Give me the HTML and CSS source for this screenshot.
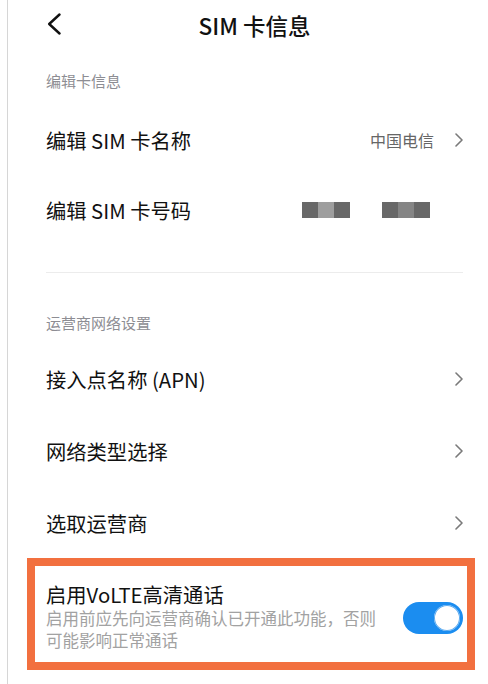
FILE: index.html
```html
<!DOCTYPE html>
<html lang="zh-CN">
<head>
<meta charset="utf-8">
<title>SIM 卡信息</title>
<link rel="stylesheet" href="styles.css">
</head>
<body>
<div class="screen">
  <header class="header">
    <svg class="back" viewBox="0 0 14 22" aria-hidden="true"><polyline points="12.5,1.5 2.2,11 12.5,20.5" fill="none" stroke="#111" stroke-width="2.4" stroke-linecap="round" stroke-linejoin="round"/></svg>
    <div class="title">SIM 卡信息</div>
    <div></div>
  </header>

  <div class="section-label first">编辑卡信息</div>
  <div class="group">
    <div class="row">
      <div class="row-title">编辑 SIM 卡名称</div>
      <div class="value">中国电信</div>
      <svg class="chev" viewBox="0 0 8 14" aria-hidden="true"><polyline points="1,1 7,7 1,13" fill="none" stroke="#7a7a7a" stroke-width="1.6" stroke-linecap="round" stroke-linejoin="round"/></svg>
    </div>
    <div class="row">
      <div class="row-title">编辑 SIM 卡号码</div>
      <div class="mask">
        <span class="px d"></span><span class="px l"></span><span class="px d"></span>
      </div>
      <div class="mask">
        <span class="px d"></span><span class="px m"></span><span class="px d"></span>
      </div>
    </div>
  </div>

  <div class="divider"></div>

  <div class="section-label second">运营商网络设置</div>
  <div class="group second">
    <div class="row tall">
      <div class="row-title">接入点名称 (APN)</div>
      <svg class="chev" viewBox="0 0 8 14" aria-hidden="true"><polyline points="1,1 7,7 1,13" fill="none" stroke="#7a7a7a" stroke-width="1.6" stroke-linecap="round" stroke-linejoin="round"/></svg>
    </div>
    <div class="row tall">
      <div class="row-title">网络类型选择</div>
      <svg class="chev" viewBox="0 0 8 14" aria-hidden="true"><polyline points="1,1 7,7 1,13" fill="none" stroke="#7a7a7a" stroke-width="1.6" stroke-linecap="round" stroke-linejoin="round"/></svg>
    </div>
    <div class="row tall">
      <div class="row-title">选取运营商</div>
      <svg class="chev" viewBox="0 0 8 14" aria-hidden="true"><polyline points="1,1 7,7 1,13" fill="none" stroke="#7a7a7a" stroke-width="1.6" stroke-linecap="round" stroke-linejoin="round"/></svg>
    </div>
  </div>

  <div class="highlight">
    <div class="volte">
      <div class="volte-text">
        <div class="volte-title">启用VoLTE高清通话</div>
        <div class="volte-sub">启用前应先向运营商确认已开通此功能，否则可能影响正常通话</div>
      </div>
      <div class="toggle"><span class="knob"></span></div>
    </div>
  </div>
</div>
</body>
</html>
```

FILE: styles.css
```css
html, body {
  margin: 0;
  padding: 0;
  background: #ffffff;
}

body {
  font-family: "Noto Sans CJK SC", "Noto Sans", sans-serif;
  color: #111111;
}

.screen {
  margin-left: 7px;
  border-left: 1px solid #d6d6d6;
  min-height: 684px;
  box-sizing: border-box;
  padding: 0 25px 0 38px;
  overflow: hidden;
}

.header {
  display: grid;
  grid-template-columns: 1fr auto 1fr;
  align-items: center;
  height: 48px;
}

.back {
  justify-self: start;
  width: 14px;
  height: 22px;
  margin-left: 1px;
}

.title {
  font-size: 22.5px;
  font-weight: 500;
  color: #111111;
  line-height: 30px;
  margin-top: 2px;
}

.section-label {
  font-size: 15px;
  line-height: 20px;
  color: #8d8d93;
}

.section-label.first {
  margin-top: 23px;
}

.section-label.second {
  margin-top: 40px;
}

.group {
  margin-top: 14px;
}

.group.second {
  margin-top: 10px;
}

.row {
  display: flex;
  align-items: center;
  height: 70px;
  font-size: 20.3px;
  color: #111111;
}

.row-title {
  flex: 1;
  line-height: 28px;
}

.value {
  font-size: 16px;
  color: #666666;
  margin-right: 21px;
}

.chev {
  width: 8px;
  height: 14px;
  flex: none;
}

.mask {
  display: flex;
  height: 16px;
  margin-right: 32px;
}

.mask:last-child {
  margin-right: 33px;
}

.px {
  width: 16px;
  height: 16px;
}

.px.d { background: #686868; }
.px.l { background: #9e9e9e; }
.px.m { background: #858585; }

.divider {
  height: 1px;
  background: #ececec;
  margin-top: 27px;
}

.row.tall {
  height: 72px;
}

.highlight {
  margin: -1px -12px 0 -19px;
  border: 8px solid #f2703f;
  padding: 15px 4px 11px 11px;
}

.volte {
  display: flex;
  align-items: center;
  gap: 20px;
}

.volte-text {
  flex: 1;
}

.volte-title {
  font-size: 20.3px;
  line-height: 26px;
  color: #111111;
}

.volte-sub {
  font-size: 16.5px;
  line-height: 22px;
  color: #a2a2a2;
}

.toggle {
  flex: none;
  width: 60px;
  height: 32px;
  border-radius: 16px;
  background: #1b8df0;
  display: flex;
  align-items: center;
  justify-content: flex-end;
  padding: 0 3px;
  box-sizing: border-box;
  margin-top: 4px;
}

.knob {
  width: 26px;
  height: 26px;
  border-radius: 50%;
  background: #ffffff;
  box-shadow: 0 0 0 1px #5aaaf0 inset;
}
```
